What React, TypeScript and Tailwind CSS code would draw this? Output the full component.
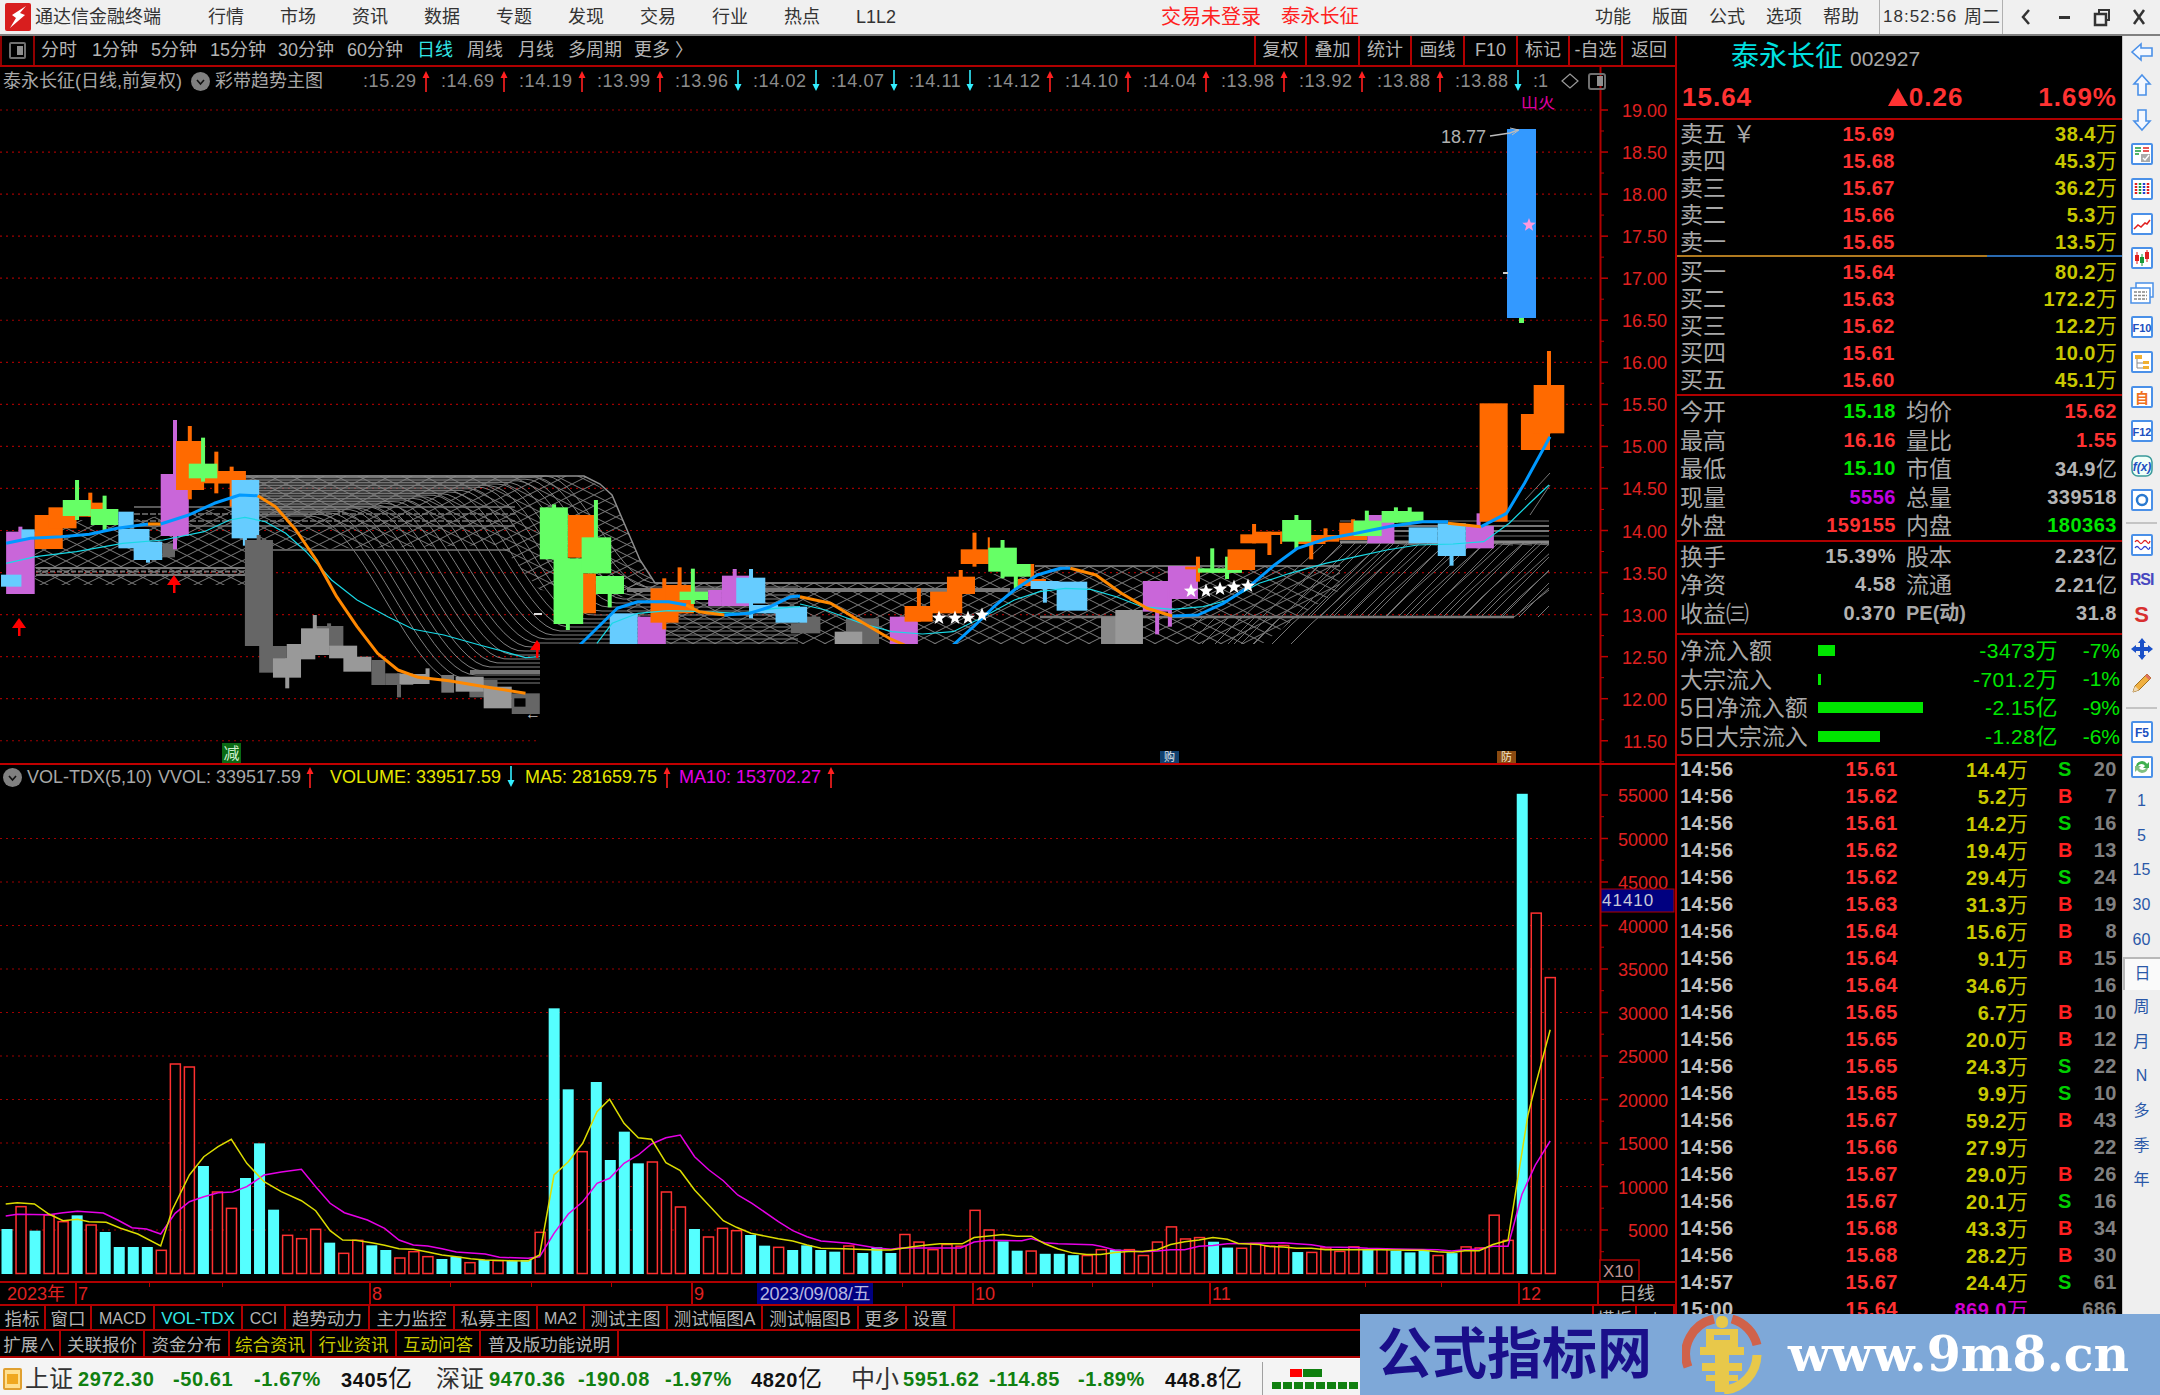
import React from "react";

const OR = "#ff6a00", GR = "#66ff66", PU = "#c966d9", LB = "#66ccff", DG = "#666666", MG = "#999999";

type C = [number, number, number, number, string, number?, number?, number?];
const z7 = (c: C): C => [c[0] / 1.96, c[1] / 1.96, 400 + c[2] / 3, 400 + c[3] / 3, c[4], c[5] === undefined ? undefined : c[5] / 1.96, c[6] === undefined ? undefined : 400 + c[6] / 3, c[7] === undefined ? undefined : 400 + c[7] / 3];
const z8 = (c: C): C => [800 + c[0] / 1.96, 800 + c[1] / 1.96, 400 + c[2] / 3, 400 + c[3] / 3, c[4], c[5] === undefined ? undefined : 800 + c[5] / 1.96, c[6] === undefined ? undefined : 400 + c[6] / 3, c[7] === undefined ? undefined : 400 + c[7] / 3];

const cand7: C[] = [
  [12, 68, 395, 582, PU, 40, 380, 582],
  [2, 42, 524, 560, LB],
  [42, 68, 388, 415, LB],
  [68, 123, 345, 447, OR],
  [95, 150, 322, 385, OR],
  [150, 205, 308, 350, OR, 177, 278, 350],
  [123, 178, 300, 348, GR, 151, 240, 360],
  [178, 232, 327, 375, GR, 205, 287, 390],
  [232, 262, 335, 385, LB],
  [232, 293, 387, 445, LB],
  [262, 318, 425, 480, LB, 290, 425, 488],
  [318, 343, 430, 472, DG],
  [315, 370, 222, 408, PU, 343, 60, 448],
  [345, 400, 123, 270, OR, 372, 78, 298],
  [400, 455, 213, 250, OR, 424, 155, 280],
  [427, 482, 213, 250, OR, 454, 200, 320],
  [370, 426, 191, 235, GR, 398, 113, 245],
  [454, 508, 240, 415, LB, 480, 240, 437],
  [480, 535, 420, 738, DG, 507, 405, 738],
  [508, 562, 738, 818, DG],
  [618, 673, 678, 740, DG, 645, 670, 740],
  [535, 590, 775, 833, MG, 563, 775, 865],
  [562, 618, 732, 778, MG],
  [590, 645, 685, 765, MG, 617, 645, 765],
  [645, 700, 737, 775, MG],
  [673, 728, 770, 815, MG],
  [728, 755, 780, 855, DG],
  [755, 810, 820, 855, DG, 782, 820, 892],
  [783, 838, 822, 852, MG, 838, 805, 852],
  [865, 890, 825, 878, "#777777"],
  [920, 975, 840, 892, DG],
  [893, 948, 830, 875, MG],
  [1003, 1058, 880, 942, DG],
  [948, 1003, 860, 925, MG],
  [1008, 1030, 895, 920, "#000000"],
  [1113, 1168, 345, 473, OR],
  [1140, 1168, 520, 640, OR],
  [1058, 1113, 322, 478, GR, 1086, 313, 478],
  [1085, 1143, 475, 672, GR, 1113, 475, 690],
  [1140, 1198, 412, 520, GR, 1168, 300, 520],
  [1168, 1223, 528, 582, GR, 1195, 528, 622],
  [1195, 1250, 640, 740, LB],
  [1250, 1305, 650, 740, PU],
  [1275, 1330, 565, 668, OR, 1302, 535, 688],
  [1305, 1360, 555, 640, OR, 1332, 502, 640],
  [1332, 1388, 575, 600, GR, 1358, 506, 612],
  [1388, 1415, 570, 618, PU],
  [1415, 1470, 527, 618, PU, 1440, 507, 618],
  [1443, 1500, 533, 610, LB, 1472, 507, 655],
  [1470, 1525, 615, 640, LB],
  [1550, 1568, 670, 700, DG],
  [1520, 1568, 620, 668, LB],
];
const cand8: C[] = [
  [0, 40, 650, 700, DG],
  [90, 155, 655, 735, DG],
  [68, 122, 695, 735, MG],
  [0, 14, 620, 668, LB],
  [176, 231, 650, 735, PU],
  [205, 260, 618, 665, OR, 233, 565, 665],
  [255, 318, 575, 640, OR],
  [288, 343, 530, 582, OR, 315, 510, 582],
  [315, 370, 448, 492, OR, 342, 398, 500],
  [368, 372, 412, 450, OR],
  [427, 482, 537, 558, OR, 455, 492, 558],
  [395, 452, 492, 530, GR, 423, 492, 570],
  [369, 425, 443, 515, GR, 397, 420, 535],
  [452, 507, 543, 567, LB, 480, 543, 608],
  [503, 563, 545, 632, LB],
  [590, 672, 650, 735, "#888888"],
  [618, 672, 630, 735, MG],
  [672, 727, 543, 635, PU, 700, 543, 703],
  [725, 780, 498, 597, PU, 725, 498, 680],
  [755, 782, 500, 508, OR, 780, 470, 545],
  [780, 866, 505, 518, GR, 808, 445, 518],
  [807, 866, 508, 518, GR, 837, 470, 537],
  [838, 892, 448, 510, OR],
  [863, 918, 403, 430, OR, 890, 372, 430],
  [890, 945, 395, 405, OR, 920, 395, 465],
  [941, 945, 395, 432, OR],
  [975, 1030, 405, 432, OR, 1002, 405, 478],
  [1003, 1057, 405, 425, OR, 1030, 385, 425],
  [945, 1002, 360, 425, GR, 973, 345, 447],
  [1057, 1112, 368, 420, OR, 1084, 358, 420],
  [1112, 1165, 345, 430, PU],
  [1085, 1140, 362, 408, GR, 1111, 332, 408],
  [1167, 1222, 335, 365, GR, 1195, 322, 365],
  [1140, 1195, 333, 368, GR, 1168, 322, 368],
  [1193, 1250, 382, 430, LB],
  [1305, 1360, 378, 445, PU, 1330, 340, 445],
  [1250, 1305, 370, 468, LB, 1277, 370, 497],
  [1332, 1387, 10, 365, OR],
  [1413, 1470, 42, 150, OR],
  [1438, 1498, -45, 100, OR, 1468, -147, 100],
];
const candles: C[] = [...cand7.map(z7), ...cand8.map(z8)];

const P7 = (a: number[]) => { const o: string[] = []; for (let i = 0; i < a.length; i += 2) o.push(`${(a[i] / 1.96).toFixed(1)},${(400 + a[i + 1] / 3).toFixed(1)}`); return o.join(" "); };
const P8 = (a: number[]) => { const o: string[] = []; for (let i = 0; i < a.length; i += 2) o.push(`${(800 + a[i] / 1.96).toFixed(1)},${(400 + a[i + 1] / 3).toFixed(1)}`); return o.join(" "); };

const BLUE_T = "#0099ff", ORG_T = "#ff8800", CY_T = "#19d9e6";
const trend: [string, string][] = [
  [BLUE_T, P7([12, 430, 60, 415, 120, 410, 175, 403, 230, 385, 290, 372])],
  [ORG_T, P7([290, 372, 315, 372])],
  [BLUE_T, P7([315, 372, 370, 345, 420, 310, 470, 285, 505, 287])],
  [ORG_T, P7([505, 287, 540, 320, 580, 390, 620, 480, 660, 590, 700, 680, 740, 760, 780, 810, 820, 832, 880, 842, 950, 860, 1030, 880])],
  [BLUE_T, P7([1130, 745, 1180, 670, 1210, 625, 1250, 605, 1310, 605, 1345, 615])],
  [ORG_T, P7([1345, 615, 1370, 635, 1420, 645])],
  [BLUE_T, P7([1420, 645, 1470, 640, 1510, 620, 1550, 590, 1568, 588])],
  [ORG_T, P8([0, 590, 60, 610, 120, 665, 175, 715, 205, 735])],
  [BLUE_T, P8([300, 735, 340, 680, 380, 620, 420, 570, 465, 525, 510, 505, 530, 505])],
  [ORG_T, P8([530, 505, 580, 525, 630, 580, 680, 625, 730, 648])],
  [BLUE_T, P8([730, 648, 780, 645, 830, 610, 880, 560, 930, 495, 975, 445, 1030, 417, 1090, 400, 1160, 378, 1220, 365, 1270, 365])],
  [ORG_T, P8([1270, 370, 1335, 380])],
  [BLUE_T, P8([1335, 380, 1385, 340, 1420, 250, 1470, 110])],
];
const cyan1 = P7([12, 490, 70, 470, 150, 455, 240, 430, 320, 420, 400, 395, 450, 360, 480, 352, 520, 365, 560, 400, 600, 455, 650, 540, 700, 600, 760, 650, 810, 688, 870, 705, 940, 735, 1000, 760, 1030, 773, 1058, 770]);
const cyan2 = P7([1170, 730, 1200, 670, 1250, 640, 1310, 632, 1380, 635, 1450, 640, 1520, 625, 1568, 620]);
const cyan3 = P8([0, 612, 50, 630, 120, 670, 180, 695, 240, 702, 300, 695, 360, 650, 420, 600, 470, 575, 520, 565, 570, 568, 620, 590, 670, 620, 730, 628, 790, 620, 840, 600, 900, 550, 960, 520, 1030, 490, 1090, 470, 1150, 450, 1210, 435, 1280, 432, 1340, 425, 1390, 370, 1430, 310, 1468, 255]);

const smooth = (t: number) => { const u = Math.max(0, Math.min(1, t)); return u * u * (3 - 2 * u); };
const fan = Array.from({ length: 26 }, (_, k) => {
  const t = k / 25;
  const xs = 545 - t * 235, yf = 583 + t * 100, y0 = 476 + t * 40, W = 110 + t * 40;
  const pts: string[] = [];
  for (let x = 245; x <= 800; x += 7) pts.push(`${x},${(y0 + (yf - y0) * smooth((x - xs) / W)).toFixed(1)}`);
  return pts.join(" ");
});
const rise = Array.from({ length: 19 }, (_, k) => {
  const xs = 1215 + k * 19;
  const base = xs < 1295 ? 644 : 617;
  return `${xs},${base} ${xs + 20},${base - 20} ${xs + 80},${base - 74} ${xs + 108},545`;
});

const star = (cx: number, cy: number, r: number) => {
  const p: string[] = [];
  for (let i = 0; i < 10; i++) {
    const a = -Math.PI / 2 + (i * Math.PI) / 5;
    const rr = i % 2 ? r * 0.42 : r;
    p.push(`${(cx + rr * Math.cos(a)).toFixed(1)},${(cy + rr * Math.sin(a)).toFixed(1)}`);
  }
  return p.join(" ");
};

const MainChart = () => {
  const levels = ["19.00", "18.50", "18.00", "17.50", "17.00", "16.50", "16.00", "15.50", "15.00", "14.50", "14.00", "13.50", "13.00", "12.50", "12.00", "11.50"];
  return (
    <svg className="absolute inset-0" width={1676} height={696} viewBox="0 67 1676 696">
      <defs>
        <pattern id="net" width="22" height="11" patternUnits="userSpaceOnUse">
          <path d="M0 0L22 11M0 11L22 0" stroke="#7c7c7c" strokeWidth="1" fill="none" />
        </pattern>
        <pattern id="hatch" width="13" height="13" patternUnits="userSpaceOnUse">
          <path d="M0 13L13 0" stroke="#6e6e6e" strokeWidth="1" fill="none" />
        </pattern>
        <clipPath id="riseClip"><rect x={1100} y={500} width={449} height={160} /></clipPath>
      </defs>
      {levels.map((_, k) => (
        <line key={k} x1={0} x2={1596} y1={110 + 42.05 * k} y2={110 + 42.05 * k} stroke="#a00000" strokeWidth={1.2} strokeDasharray="2 4" />
      ))}
      <polygon fill="url(#net)" points="35,520 130,520 245,505 245,585 35,585" />
      <polygon fill="url(#net)" points="245,476 584,476 612,495 640,560 655,583 655,600 540,590 500,545 270,550 245,585" />
      <polygon fill="url(#net)" points="627,583 948,583 1035,566 1340,566 1340,590 1297,617 1262,644 627,644" />
      <polygon fill="url(#hatch)" points="1193,644 1193,617 1297,617 1262,644" />
      <polygon fill="url(#hatch)" points="1297,617 1514,617 1549,590 1549,543 1340,543 1300,575" />
      {fan.map((p, i) => <polyline key={i} points={p} fill="none" stroke="#808080" strokeWidth={1} />)}
      <g clipPath="url(#riseClip)">
        {rise.map((p, i) => <polyline key={i} points={p} fill="none" stroke="#767676" strokeWidth={1} />)}
      </g>
      <polyline points="245,476 584,476 600,484 612,495 640,560 655,583 948,583" fill="none" stroke="#8e8e8e" strokeWidth={1.5} />
      <polyline points="1035,566 1340,566" fill="none" stroke="#8e8e8e" strokeWidth={1.5} />
      <g stroke="#777" fill="none">
        <line x1={36} x2={245} y1={568} y2={568} strokeWidth={2} />
        <line x1={36} x2={245} y1={571.5} y2={571.5} strokeWidth={2} strokeDasharray="5 2" />
        <line x1={36} x2={245} y1={575} y2={575} strokeWidth={2} />
        <line x1={134} x2={515} y1={507} y2={507} strokeWidth={1.5} />
        <line x1={134} x2={515} y1={514} y2={514} strokeWidth={1.5} strokeDasharray="6 2" />
        <line x1={134} x2={515} y1={521} y2={521} strokeWidth={1.5} strokeDasharray="6 2" />
        <line x1={134} x2={515} y1={526} y2={526} strokeWidth={1.5} />
        <line x1={270} x2={510} y1={550} y2={550} strokeWidth={1.5} />
        <line x1={470} x2={540} y1={672} y2={672} strokeWidth={4} />
        <line x1={627} x2={1010} y1={590} y2={590} strokeWidth={4} />
        <line x1={1040} x2={1514} y1={617} y2={617} strokeWidth={2.5} />
        <line x1={1340} x2={1549} y1={521} y2={521} strokeWidth={1} />
        <line x1={1340} x2={1549} y1={526} y2={526} strokeWidth={2} />
        <line x1={1340} x2={1549} y1={531} y2={531} strokeWidth={2} />
        <line x1={1340} x2={1549} y1={536} y2={536} strokeWidth={1} />
        <line x1={1340} x2={1549} y1={542} y2={542} strokeWidth={3} stroke="#888" />
        <polyline points="1514,617 1549,590" strokeWidth={1} />
      </g>
      {candles.map((c, i) => (
        <g key={i} fill={c[4]}>
          {c[5] !== undefined && <rect x={c[5] - 2} y={c[6]} width={4} height={(c[7] as number) - (c[6] as number)} />}
          <rect x={c[0]} y={c[2]} width={c[1] - c[0]} height={c[3] - c[2]} />
        </g>
      ))}
      <polyline points={cyan1} fill="none" stroke={CY_T} strokeWidth={1.2} />
      <polyline points={cyan2} fill="none" stroke={CY_T} strokeWidth={1.2} />
      <polyline points={cyan3} fill="none" stroke={CY_T} strokeWidth={1.2} />
      {trend.map(([c, p], i) => <polyline key={i} points={p} fill="none" stroke={c} strokeWidth={3} strokeLinejoin="round" />)}
      <polyline points="1525,500 1550,473" fill="none" stroke="#777" strokeWidth={1} />
      <polyline points="1530,515 1550,485" fill="none" stroke="#777" strokeWidth={1} />

      {[[19, 618], [174, 575], [537, 640]].map(([x, y], i) => (
        <g key={i} fill="#ff0000">
          <polygon points={`${x - 7},${y + 10} ${x},${y} ${x + 7},${y + 10}`} />
          <rect x={x - 1} y={y + 9} width={2.5} height={9} />
        </g>
      ))}
      <rect x={534} y={613} width={8} height={2} fill="#ddd" />
      <rect x={540} y={644} width={1060} height={119} fill="#000" />
      <text x={525} y={719} fontSize={16} fill="#bbb">←</text>

      {[[939, 618], [955, 618], [968, 618], [982, 615], [1191, 591], [1206, 591], [1220, 589], [1234, 587], [1248, 586]].map(([x, y], i) => (
        <polygon key={i} points={star(x, y, 7.5)} fill="#fff" />
      ))}

      <rect x={1507} y={129} width={29} height={189} fill="#3399ff" />
      <rect x={1519} y={318} width={5} height={5} fill="#66ff66" />
      <polygon points={star(1529, 225, 7)} fill="#ff99dd" />
      <rect x={1503} y={272} width={5} height={2} fill="#ccc" />
      <text x={1441} y={143} fontSize={18} fill="#b0b0b0">18.77</text>
      <polyline points="1490,136 1510,133 1518,130" fill="none" stroke="#bbb" strokeWidth={1.5} />
      <polyline points="1510,128 1519,130 1512,135" fill="none" stroke="#bbb" strokeWidth={1} />
      <text x={1521} y={108} fontSize={17} fill="#e000a0">山灭</text>
      <rect x={1515} y={91} width={46} height={5} fill="#000" />

      {levels.map((l, k) => {
        const y = 110 + 42.05 * k;
        return (
          <g key={l}>
            <line x1={1600} x2={1608} y1={y} y2={y} stroke="#c00000" strokeWidth={1.5} />
            <line x1={1600} x2={1604} y1={y + 21} y2={y + 21} stroke="#c00000" strokeWidth={1} />
            <text x={1667} y={y + 7} fontSize={18} textAnchor="end" fill="#e02020">{l}</text>
          </g>
        );
      })}
      <line x1={1600.5} x2={1600.5} y1={67} y2={763} stroke="#b00000" strokeWidth={2} />

      <rect x={222} y={743} width={19} height={20} fill="#0a6a14" />
      <text x={231.5} y={759} fontSize={16} textAnchor="middle" fill="#d0f0d0">减</text>
      <rect x={1160} y={751} width={19} height={12} fill="#10406e" />
      <text x={1169.5} y={761} fontSize={11} textAnchor="middle" fill="#e0e8f0">购</text>
      <rect x={1497} y={751} width={19} height={12} fill="#8a4a10" />
      <text x={1506.5} y={761} fontSize={11} textAnchor="middle" fill="#f0e8d0">防</text>
    </svg>
  );
};

const v1 = "C1407 R1340 C1412 R1365 R1385 C1366 R1395 C1416 C1461 C1461 C1461 R1471 R912 R921 C1218 R1296 R1345 C1254 C1150 C1349 R1426 R1436 R1408 C1448 R1480 R1441 C1456 C1470 R1494 R1475 R1490 C1497 C1490 R1508 C1500 R1502 C1503 C1500 R1417 C745 C988 R1175 C966 C1200 C1115 C1210 R1206 R1296 R1341 C1407 R1431 R1405 R1412 C1425 C1457 R1462 C1470 C1456 C1470 C1475 R1458 C1479 C1462 C1479"
  .split(" ").map((s) => ({ c: s[0], y: 760 + Number(s.slice(1)) / 3 }));
const v2 = "R1376 R1398 R1420 R1405 R1410 R1306 R1363 C1396 C1423 R1424 C1432 C1432 C1436 R1437 R1420 C1420 R1420 R1437 R1398 R1354 R1389 R1385 C1397 C1414 R1416 R1402 R1410 R1408 C1427 R1428 R1415 R1425 R1412 C1420 R1418 C1423 C1428 C1422 R1437 C1430 R1412 R1415 R1320 R1393 C98 R444 R631"
  .split(" ").map((s) => ({ c: s[0], y: 760 + Number(s.slice(1)) / 2.9 }));
const bars = [...v1, ...v2];

const L10 = (a: number[]) => { const o: string[] = []; for (let i = 0; i < a.length; i += 2) o.push(`${(a[i] / 1.742).toFixed(1)},${(760 + a[i + 1] / 3).toFixed(1)}`); return o; };
const L11 = (a: number[]) => { const o: string[] = []; for (let i = 0; i < a.length; i += 2) o.push(`${(900 + a[i] / 2.01).toFixed(1)},${(760 + a[i + 1] / 2.9).toFixed(1)}`); return o; };

const yellow = [
  ...L10([10, 1332, 30, 1328, 60, 1332, 85, 1362, 110, 1382, 135, 1378, 155, 1385, 185, 1387, 210, 1405, 240, 1422, 280, 1458, 300, 1350, 330, 1245, 355, 1190, 380, 1160, 403, 1138, 430, 1210, 460, 1265, 490, 1295, 525, 1322, 550, 1352, 575, 1412, 597, 1440, 620, 1441, 650, 1449, 670, 1456, 695, 1466, 720, 1468, 745, 1476, 770, 1485, 795, 1490, 820, 1496, 845, 1500, 890, 1502, 920, 1503, 940, 1485, 965, 1245, 990, 1205, 1015, 1150, 1040, 1055, 1062, 1018, 1087, 1090, 1112, 1133, 1135, 1138, 1160, 1208, 1185, 1232, 1210, 1290, 1260, 1382, 1283, 1402, 1308, 1420, 1356, 1436, 1381, 1443, 1406, 1455, 1430, 1465, 1470, 1466, 1527, 1470, 1552, 1470]),
  ...L11([22, 1412, 50, 1407, 80, 1403, 125, 1403, 149, 1385, 179, 1380, 207, 1376, 235, 1381, 264, 1381, 291, 1403, 318, 1418, 348, 1430, 375, 1434, 403, 1434, 432, 1428, 459, 1425, 487, 1425, 517, 1420, 544, 1405, 572, 1397, 601, 1392, 629, 1385, 658, 1390, 680, 1402, 722, 1405, 743, 1411, 770, 1412, 797, 1416, 827, 1416, 855, 1420, 940, 1420, 967, 1420, 1023, 1422, 1051, 1422, 1081, 1426, 1109, 1428, 1135, 1423, 1164, 1423, 1192, 1405, 1222, 1393, 1240, 1230, 1262, 1030, 1277, 945, 1307, 782]),
].join(" ");
const magenta = [
  ...L10([10, 1368, 30, 1363, 85, 1364, 110, 1358, 135, 1354, 180, 1359, 205, 1380, 230, 1403, 255, 1407, 280, 1422, 305, 1360, 330, 1325, 355, 1310, 380, 1298, 405, 1296, 430, 1280, 460, 1245, 490, 1236, 525, 1228, 550, 1280, 575, 1330, 600, 1358, 640, 1380, 670, 1405, 695, 1440, 720, 1455, 745, 1458, 770, 1466, 795, 1476, 845, 1482, 870, 1492, 920, 1495, 940, 1490, 965, 1420, 990, 1362, 1015, 1325, 1040, 1270, 1062, 1255, 1087, 1210, 1112, 1185, 1135, 1152, 1160, 1133, 1185, 1125, 1210, 1190, 1235, 1230, 1260, 1262, 1285, 1305, 1310, 1330, 1356, 1385, 1381, 1412, 1406, 1430, 1430, 1443, 1478, 1450, 1527, 1464, 1552, 1468]),
  ...L11([0, 1415, 122, 1415, 149, 1398, 179, 1393, 245, 1394, 264, 1388, 291, 1400, 318, 1403, 387, 1406, 403, 1410, 432, 1421, 487, 1426, 517, 1424, 544, 1420, 572, 1420, 601, 1410, 629, 1408, 658, 1403, 770, 1400, 797, 1403, 827, 1406, 855, 1412, 912, 1414, 940, 1416, 996, 1418, 1081, 1420, 1109, 1424, 1135, 1420, 1164, 1418, 1192, 1410, 1222, 1410, 1250, 1260, 1277, 1175, 1307, 1105]),
].join(" ");

const VolChart = () => {
  const labels = ["55000", "50000", "45000", "40000", "35000", "30000", "25000", "20000", "15000", "10000", "5000"];
  return (
    <svg className="absolute inset-0" width={1676} height={516} viewBox="0 765 1676 516">
      {labels.slice(1).map((l, k) => (
        <line key={l} x1={0} x2={1596} y1={838.5 + 43.5 * k} y2={838.5 + 43.5 * k} stroke="#a00000" strokeWidth={1.2} strokeDasharray="2 4" />
      ))}
      {bars.map((b, i) => {
        const x = 7 + 14.03 * i;
        return b.c === "C" ? (
          <rect key={i} x={x - 5.5} y={b.y} width={11} height={1274 - b.y} fill="#55ffff" />
        ) : (
          <rect key={i} x={x - 5} y={b.y} width={10} height={1273.5 - b.y} fill="#000" stroke="#ff3030" strokeWidth={1.5} />
        );
      })}
      <polyline points={magenta} fill="none" stroke="#e600e6" strokeWidth={1.5} />
      <polyline points={yellow} fill="none" stroke="#dcdc00" strokeWidth={1.5} />
      {labels.map((l, k) => {
        const y = 795 + 43.5 * k;
        return (
          <g key={l}>
            <line x1={1600} x2={1608} y1={y} y2={y} stroke="#c00000" strokeWidth={1.5} />
            <line x1={1600} x2={1604} y1={y + 21.7} y2={y + 21.7} stroke="#c00000" strokeWidth={1} />
            <text x={1668} y={y + 7} fontSize={18} textAnchor="end" fill="#e02020">{l}</text>
          </g>
        );
      })}
      <line x1={1600.5} x2={1600.5} y1={765} y2={1281} stroke="#b00000" strokeWidth={2} />
      <rect x={1601} y={889} width={73} height={23} fill="#000080" stroke="#b00000" strokeWidth={1} />
      <text x={1602} y={906} fontSize={17} letterSpacing={1} fill="#c8c8d8">41410</text>
      <rect x={1600} y={1260} width={39} height={21} fill="#000" stroke="#b00000" strokeWidth={1.5} />
      <text x={1603} y={1277} fontSize={17} fill="#c09090">X10</text>
    </svg>
  );
};

const ArrowUp = () => (
  <svg width={8} height={24} viewBox="0 0 8 24" className="shrink-0"><path d="M4 2L7.5 9H4.8V23H3.2V9H.5Z" fill="#ff2020" /></svg>
);
const ArrowDown = () => (
  <svg width={8} height={24} viewBox="0 0 8 24" className="shrink-0"><path d="M3.2 1H4.8V15H7.5L4 22L.5 15H3.2Z" fill="#33eeff" /></svg>
);
const CircleDown = () => (
  <span className="flex h-[19px] w-[19px] items-center justify-center rounded-full bg-[#808080]">
    <svg width={11} height={11} viewBox="0 0 11 11"><path d="M2 4L5.5 8L9 4" stroke="#111" strokeWidth={1.6} fill="none" /></svg>
  </span>
);

const series: [string, boolean][] = [["15.29", true], ["14.69", true], ["14.19", true], ["13.99", true], ["13.96", false], ["14.02", false], ["14.07", false], ["14.11", false], ["14.12", true], ["14.10", true], ["14.04", true], ["13.98", true], ["13.92", true], ["13.88", true], ["13.88", false]];

const TitleBar = () => (
  <div className="flex h-[36px] items-center border-b-2 border-[#808080] bg-[#f0f0f0] text-[18px] text-[#333]">
    <div className="flex w-[35px] justify-center">
      <svg width={26} height={28} viewBox="0 0 26 28">
        <rect width={26} height={28} rx={2} fill="#d81e1e" />
        <path d="M21 3L7 12L11 15L5 25L20 12L15 10Z" fill="#fff" />
      </svg>
    </div>
    <div className="w-[173px]">通达信金融终端</div>
    {["行情", "市场", "资讯", "数据", "专题", "发现", "交易", "行业", "热点", "L1L2"].map((m) => (
      <div key={m} className="w-[72px]">{m}</div>
    ))}
    <div className="w-[233px]" />
    <div className="w-[120px] text-[20px] text-[#ff2020]">交易未登录</div>
    <div className="w-[314px] text-[19.5px] text-[#ff2020]">泰永长征</div>
    {["功能", "版面", "公式", "选项", "帮助"].map((m) => (
      <div key={m} className="w-[57px]">{m}</div>
    ))}
    <div className="ml-[-1px] flex h-[34px] w-[124px] items-center border-x border-[#b0b0b0] pl-[3px]">
      <span className="w-[81px] text-[17px] tracking-[1px]">18:52:56</span>
      <span>周二</span>
    </div>
    <svg width={157} height={24} viewBox="0 0 157 24" className="shrink-0">
      <path d="M26 5L20 12L26 19" stroke="#333" strokeWidth={2.5} fill="none" />
      <rect x={56} y={11} width={11} height={3} fill="#333" />
      <rect x={92} y={9} width={11} height={11} fill="none" stroke="#333" strokeWidth={2.5} />
      <path d="M96 8V5H106V15H104" fill="none" stroke="#333" strokeWidth={2} />
      <path d="M131 5L141 19M141 5L131 19" stroke="#333" strokeWidth={2.5} />
    </svg>
  </div>
);

const periods: [string, string][] = [["分时", "w-[51px]"], ["1分钟", "w-[59px]"], ["5分钟", "w-[59px]"], ["15分钟", "w-[68px]"], ["30分钟", "w-[69px]"], ["60分钟", "w-[70px]"], ["日线", "w-[50px] text-[#33e6e6]"], ["周线", "w-[51px]"], ["月线", "w-[50px]"], ["多周期", "w-[66px]"], ["更多 〉", "w-[60px]"]];
const toolRight: [string, string][] = [["复权", "w-[51px]"], ["叠加", "w-[53px]"], ["统计", "w-[52px]"], ["画线", "w-[53px]"], ["F10", "w-[53px]"], ["标记", "w-[52px]"], ["-自选", "w-[53px]"], ["返回", "w-[54px]"]];

const ChartToolbar = () => (
  <div className="flex h-[31px] shrink-0 items-center border-b-2 border-[#b00000] text-[18px] text-[#b4b4b4]">
    <div className="mr-[6px] flex h-full w-[35px] items-center justify-center border-x-2 border-[#900000]">
      <span className="flex h-[17px] w-[17px] items-center justify-end rounded-[2px] border-2 border-[#707070] pr-[1px]">
        <span className="h-[9px] w-[6px] bg-[#909090]" />
      </span>
    </div>
    {periods.map(([t, c]) => (<div key={t} className={`${c} whitespace-nowrap`}>{t}</div>))}
    <div className="flex-1" />
    {toolRight.map(([t, c]) => (
      <div key={t} className={`${c} flex h-full items-center justify-center border-l-2 border-[#b00000]`}>{t}</div>
    ))}
  </div>
);

const ChartPanes = () => (
  <>
    <div className="relative h-[696px] shrink-0 overflow-hidden">
      <MainChart />
      <div className="relative flex h-[28px] items-center text-[18px] text-[#a8a8a8]">
        <div className="w-[191px] whitespace-nowrap pl-[3px]">泰永长征(日线,前复权)</div>
        <div className="w-[24px]"><CircleDown /></div>
        <div className="w-[148px]">彩带趋势主图</div>
        {series.map(([v, up], i) => (
          <div key={i} className="flex w-[78px] items-center gap-[5px] tracking-[0.6px] text-[#8c8c8c]">
            <span>:{v}</span>{up ? <ArrowUp /> : <ArrowDown />}
          </div>
        ))}
        <div className="w-[27px] text-[#8c8c8c]">:1</div>
        <svg width={28} height={18} viewBox="0 0 28 18"><path d="M2 9L10 2L18 9L10 16Z" fill="none" stroke="#999" strokeWidth={1.2} /></svg>
        <span className="flex h-[17px] w-[18px] items-center justify-end rounded-[3px] border-2 border-[#707070] pr-[1px]">
          <span className="h-[10px] w-[6px] bg-[#909090]" />
        </span>
      </div>
    </div>
    <div className="h-[2px] shrink-0 bg-[#c00000]" />
    <div className="relative h-[516px] shrink-0 overflow-hidden">
      <VolChart />
      <div className="relative flex h-[24px] items-center whitespace-nowrap text-[18px] text-[#a8a8a8]">
        <div className="w-[27px] pl-[3px]"><CircleDown /></div>
        <div className="w-[131px]">VOL-TDX(5,10)</div>
        <div className="w-[148px]">VVOL: 339517.59</div>
        <div className="w-[24px]"><ArrowUp /></div>
        <div className="w-[177px] text-[#e6e600]">VOLUME: 339517.59</div>
        <div className="w-[18px]"><ArrowDown /></div>
        <div className="w-[138px] text-[#e6e600]">MA5: 281659.75</div>
        <div className="w-[16px]"><ArrowUp /></div>
        <div className="w-[148px] text-[#e600e6]">MA10: 153702.27</div>
        <ArrowUp />
      </div>
    </div>
  </>
);

const ticksX = [149, 222, 450, 531, 611, 902, 1032, 1092, 1152, 1365, 1441];
const DateRow = () => (
  <div className="flex h-[25px] shrink-0 items-center border-y-2 border-[#b00000] text-[18px] text-[#e02020]">
    <div className="relative flex h-full w-[1599px] items-center border-r-2 border-[#b00000]">
      {ticksX.map((x) => (<span key={x} className="absolute top-0 h-[4px] w-[1px] bg-[#b00000]" style={{ left: x }} />))}
      <div className="flex h-full w-[77px] items-center border-r-2 border-[#b00000] pl-[7px] pt-[2px]">2023年</div>
      <div className="flex h-full w-[294px] items-center border-r-2 border-[#b00000] pl-[1px] pt-[2px]">7</div>
      <div className="flex h-full w-[322px] items-center border-r-2 border-[#b00000] pl-[1px] pt-[2px]">8</div>
      <div className="flex h-full w-[64px] items-center pl-[1px] pt-[2px]">9</div>
      <div className="flex h-full w-[116px] items-center justify-center bg-[#000080] pt-[2px] text-[18px] whitespace-nowrap tracking-[-0.2px] text-[#b8b8e0]">2023/09/08/五</div>
      <div className="flex h-full w-[101px] items-center border-r-2 border-[#b00000]" />
      <div className="flex h-full w-[237px] items-center border-r-2 border-[#b00000] pl-[1px] pt-[2px]">10</div>
      <div className="flex h-full w-[309px] items-center border-r-2 border-[#b00000] pl-[1px] pt-[2px]">11</div>
      <div className="flex h-full items-center pl-[1px] pt-[2px]">12</div>
    </div>
    <div className="flex-1 pt-[2px] text-center text-[#b0b0b0]">日线</div>
  </div>
);

const tabs1: [string, string][] = [["指标", "w-[46px]"], ["窗口", "w-[46px]"], ["MACD", "w-[63px] text-[16px]"], ["VOL-TDX", "w-[88px] text-[#33e6e6] text-[17px]"], ["CCI", "w-[43px] text-[16px]"], ["趋势动力", "w-[84px]"], ["主力监控", "w-[85px]"], ["私募主图", "w-[83px]"], ["MA2", "w-[47px] text-[16px]"], ["测试主图", "w-[83px]"], ["测试幅图A", "w-[95px]"], ["测试幅图B", "w-[96px]"], ["更多", "w-[48px]"], ["设置", "w-[48px]"]];
const tabs2: [string, string][] = [["扩展∧", "w-[61px]"], ["关联报价", "w-[84px]"], ["资金分布", "w-[85px]"], ["综合资讯", "w-[82px] text-[#c8c800]"], ["行业资讯", "w-[85px] text-[#c8c800]"], ["互动问答", "w-[84px] text-[#c8c800]"], ["普及版功能说明", "w-[138px]"]];

const TabRows = () => (
  <>
    <div className="flex h-[25px] shrink-0 items-center overflow-hidden border-b-2 border-[#b00000] text-[17.5px] whitespace-nowrap text-[#b4b4b4]">
      {tabs1.map(([t, c]) => (
        <div key={t} className={`${c} flex h-full items-center justify-center border-r-2 border-[#b00000] pt-[3px]`}>{t}</div>
      ))}
      <div className="flex-1" />
      <div className="flex h-full w-[45px] items-start justify-center border-x-2 border-[#b00000]">模板</div>
      <div className="w-[38px] border-r-2 border-[#b00000] text-center">+</div>
    </div>
    <div className="flex h-[27px] shrink-0 items-center overflow-hidden border-b-2 border-[#b00000] text-[17.5px] whitespace-nowrap text-[#b4b4b4]">
      {tabs2.map(([t, c]) => (
        <div key={t} className={`${c} flex h-full items-center justify-center border-r-2 border-[#b00000] pt-[3px]`}>{t}</div>
      ))}
    </div>
  </>
);

const Num = ({ v, c = "text-[#ff3232]", unit }: { v: string; c?: string; unit?: string }) => (
  <span className={`${c} whitespace-nowrap text-[20px] font-bold tracking-[0.5px]`}>
    {v}{unit && <span className="text-[21px] font-normal tracking-normal">{unit}</span>}
  </span>
);
const YL = "text-[#c8c800]", GN = "text-[#00e600]", GY = "text-[#b4b4b4]", PP = "text-[#c000e0]";

const Level = ({ l, p, v, extra }: { l: string; p: string; v: string; extra?: string }) => (
  <div className="flex h-[27px] items-center pl-[3px] pr-[5px]">
    <div className="flex w-[218px] items-center pr-[3px]">
      <span className="pt-[2px] text-[23px] text-[#a8a8a8]">{l}{extra}</span>
      <span className="ml-auto"><Num v={p} /></span>
    </div>
    <span className="ml-auto"><Num v={v} c={YL} unit="万" /></span>
  </div>
);

const Stat = ({ a, b, ac, c, d, dc, unit, cb }: { a: string; b: string; ac: string; c: string; d: string; dc: string; unit?: string; cb?: boolean }) => (
  <div className="flex h-[28.5px] items-center pl-[3px] pr-[5px]">
    <div className="flex w-[218px] items-center pr-[2px]">
      <span className="whitespace-nowrap pt-[2px] text-[23px] text-[#a8a8a8]">{a}</span>
      <span className="ml-auto"><Num v={b} c={ac} /></span>
    </div>
    <span className={`ml-[8px] whitespace-nowrap text-[#a8a8a8] ${cb ? "text-[20px] font-bold" : "pt-[2px] text-[23px]"}`}>{c}</span>
    <span className="ml-auto"><Num v={d} c={dc} unit={unit} /></span>
  </div>
);

const Flow = ({ l, w, v, u, p }: { l: string; w: string; v: string; u: string; p: string }) => (
  <div className="flex h-[28.7px] items-center pl-[3px] pr-[2px]">
    <span className="w-[138px] whitespace-nowrap pt-[2px] text-[23px] text-[#a8a8a8]">{l}</span>
    <span className={`${w} h-[11px] bg-[#00e600]`} />
    <span className="ml-auto whitespace-nowrap text-[21px] tracking-[0.5px] text-[#00e600]">{v}<span className="text-[22px]">{u}</span></span>
    <span className="w-[62px] text-right text-[21px] text-[#00e600]">{p}</span>
  </div>
);

const tradeRows: [string, string, string, string, string][] = [
  ["14:56", "15.61", "14.4", "S", "20"], ["14:56", "15.62", "5.2", "B", "7"], ["14:56", "15.61", "14.2", "S", "16"], ["14:56", "15.62", "19.4", "B", "13"],
  ["14:56", "15.62", "29.4", "S", "24"], ["14:56", "15.63", "31.3", "B", "19"], ["14:56", "15.64", "15.6", "B", "8"], ["14:56", "15.64", "9.1", "B", "15"],
  ["14:56", "15.64", "34.6", "", "16"], ["14:56", "15.65", "6.7", "B", "10"], ["14:56", "15.65", "20.0", "B", "12"], ["14:56", "15.65", "24.3", "S", "22"],
  ["14:56", "15.65", "9.9", "S", "10"], ["14:56", "15.67", "59.2", "B", "43"], ["14:56", "15.66", "27.9", "", "22"], ["14:56", "15.67", "29.0", "B", "26"],
  ["14:56", "15.67", "20.1", "S", "16"], ["14:56", "15.68", "43.3", "B", "34"], ["14:56", "15.68", "28.2", "B", "30"], ["14:57", "15.67", "24.4", "S", "61"],
  ["15:00", "15.64", "869.0", "", "686"],
];

const Sep = () => <div className="h-[2px] shrink-0 bg-[#b00000]" />;

const QuotePanel = () => (
  <div className="flex w-[445px] shrink-0 flex-col overflow-hidden">
    <div className="flex h-[40px] shrink-0 items-end pl-[54px]">
      <span className="text-[28px] leading-[38px] text-[#00e0e0]">泰永长征</span>
      <span className="ml-[7px] pb-[2px] text-[21px] text-[#a8a8a8]">002927</span>
    </div>
    <div className="flex h-[42px] shrink-0 items-center justify-between pl-[5px] pr-[5px] text-[26px] font-bold tracking-[1px] text-[#ff3232]">
      <span>15.64</span>
      <span className="ml-[60px] flex items-center">
        <svg width={22} height={20} viewBox="0 0 22 20" className="shrink-0"><path d="M11 1L21 19H1Z" fill="#ff3232" /></svg>
        0.26
      </span>
      <span>1.69%</span>
    </div>
    <Sep />
    <Level l="卖五" extra=" ￥" p="15.69" v="38.4" />
    <Level l="卖四" p="15.68" v="45.3" />
    <Level l="卖三" p="15.67" v="36.2" />
    <Level l="卖二" p="15.66" v="5.3" />
    <Level l="卖一" p="15.65" v="13.5" />
    <div className="flex h-[2px] shrink-0"><span className="w-[310px] bg-[#b07a20]" /><span className="flex-1 bg-[#2a6ab0]" /></div>
    <div className="h-[1px] shrink-0" />
    <Level l="买一" p="15.64" v="80.2" />
    <Level l="买二" p="15.63" v="172.2" />
    <Level l="买三" p="15.62" v="12.2" />
    <Level l="买四" p="15.61" v="10.0" />
    <Level l="买五" p="15.60" v="45.1" />
    <div className="h-[1px] shrink-0" />
    <Sep />
    <div className="h-[1px] shrink-0" />
    <Stat a="今开" b="15.18" ac={GN} c="均价" d="15.62" dc="text-[#ff3232]" />
    <Stat a="最高" b="16.16" ac="text-[#ff3232]" c="量比" d="1.55" dc="text-[#ff3232]" />
    <Stat a="最低" b="15.10" ac={GN} c="市值" d="34.9" unit="亿" dc={GY} />
    <Stat a="现量" b="5556" ac={PP} c="总量" d="339518" dc={GY} />
    <Stat a="外盘" b="159155" ac="text-[#ff3232]" c="内盘" d="180363" dc={GN} />
    <Sep />
    <Stat a="换手" b="15.39%" ac={GY} c="股本" d="2.23" unit="亿" dc={GY} />
    <Stat a="净资" b="4.58" ac={GY} c="流通" d="2.21" unit="亿" dc={GY} />
    <Stat a="收益㈢" b="0.370" ac={GY} c="PE(动)" cb d="31.8" dc={GY} />
    <div className="h-[6px] shrink-0" />
    <Sep />
    <div className="h-[1px] shrink-0" />
    <Flow l="净流入额" w="w-[17px]" v="-3473" u="万" p="-7%" />
    <Flow l="大宗流入" w="w-[3px]" v="-701.2" u="万" p="-1%" />
    <Flow l="5日净流入额" w="w-[105px]" v="-2.15" u="亿" p="-9%" />
    <Flow l="5日大宗流入" w="w-[62px]" v="-1.28" u="亿" p="-6%" />
    <div className="h-[3px] shrink-0" />
    <Sep />
    {tradeRows.map((r, i) => (
      <div key={i} className="flex h-[27px] shrink-0 items-center pl-[3px] pr-[5px]">
        <span className="w-[165px]"><Num v={r[0]} c="text-[#c0c0c0]" /></span>
        <span className="w-[53px] text-right"><Num v={r[1]} /></span>
        <span className="w-[130px] text-right">
          <Num v={r[2]} c={r[2] === "869.0" ? "text-[#d000d0]" : YL} unit="万" />
        </span>
        <span className={`ml-[30px] w-[14px] text-[20px] font-bold ${r[3] === "S" ? "text-[#00d000]" : "text-[#ff2020]"}`}>{r[3]}</span>
        <span className="ml-auto"><Num v={r[4]} c="text-[#808080]" /></span>
      </div>
    ))}
  </div>
);

const Ic = ({ children }: { children: React.ReactNode }) => (
  <svg width={24} height={24} viewBox="0 0 24 24">
    <rect x={2} y={2} width={20} height={20} rx={1} fill="#fff" stroke="#4a90e8" strokeWidth={2} />
    {children}
  </svg>
);
const Slot = ({ children, h = "h-[34.6px]" }: { children: React.ReactNode; h?: string }) => (
  <div className={`${h} flex shrink-0 items-center justify-center`}>{children}</div>
);
const Hr = ({ h }: { h: string }) => (
  <div className={`${h} flex shrink-0 items-center px-[3px]`}><span className="h-[2px] w-full bg-[#c4c4c4]" /></div>
);
const NumBtn = ({ t, h }: { t: string; h?: string }) => (
  <Slot h={h}><span className="text-[16px] text-[#2a58a8]">{t}</span></Slot>
);
const ArrowIc = ({ d }: { d: string }) => (
  <svg width={24} height={24} viewBox="0 0 24 24"><path d={d} fill="#f4f8ff" stroke="#4a90e8" strokeWidth={1.6} /></svg>
);

const SideBar = () => (
  <div className="flex w-[38px] shrink-0 flex-col overflow-hidden border-l border-[#c8c8c8] bg-[#efefef]">
    <Slot h="h-[32px]"><ArrowIc d="M2 12L11 4V8H22V16H11V20Z" /></Slot>
    <Slot><ArrowIc d="M12 2L20 11H16V22H8V11H4Z" /></Slot>
    <Slot><ArrowIc d="M12 22L20 13H16V2H8V13H4Z" /></Slot>
    <Slot><Ic><path d="M5 6H11M5 9H11M5 12H9" stroke="#1a9a3a" strokeWidth={1.5} /><path d="M13 6H19M13 9H19" stroke="#e02020" strokeWidth={1.5} /><rect x={11} y={12} width={9} height={8} fill="#aaa" /><path d="M13 16L15 18L19 13" stroke="#fff" strokeWidth={1.4} fill="none" /></Ic></Slot>
    <Slot><Ic><path d="M6 6V18" stroke="#e02020" strokeWidth={2.5} strokeDasharray="2 1" /><path d="M10 6V18" stroke="#1a9a3a" strokeWidth={2.5} strokeDasharray="2 1" /><path d="M14 6V18" stroke="#2040d0" strokeWidth={2.5} strokeDasharray="2 1" /><path d="M18 6V18" stroke="#e02020" strokeWidth={2.5} strokeDasharray="2 1" /></Ic></Slot>
    <Slot><Ic><polyline points="4,17 8,13 11,15 15,11 17,12 20,8" fill="none" stroke="#e02020" strokeWidth={1.5} /></Ic></Slot>
    <Slot><Ic><path d="M7 6V18" stroke="#e02020" strokeWidth={1} /><rect x={5} y={9} width={4} height={6} fill="#e02020" /><path d="M12 8V20" stroke="#1a9a3a" strokeWidth={1} /><rect x={10} y={11} width={4} height={6} fill="#1a9a3a" /><path d="M17 4V16" stroke="#e02020" strokeWidth={1} /><rect x={15} y={6} width={4} height={7} fill="#e02020" /></Ic></Slot>
    <Slot><svg width={26} height={24} viewBox="0 0 26 24"><rect x={7} y={2} width={17} height={14} fill="#fff" stroke="#4a90e8" strokeWidth={1.5} /><rect x={2} y={7} width={19} height={15} fill="#fff" stroke="#4a90e8" strokeWidth={1.5} /><path d="M5 11H18M5 14.5H18M5 18H18" stroke="#888" strokeWidth={1.5} strokeDasharray="3 1" /></svg></Slot>
    <Slot><Ic><text x={12} y={17} fontSize={11} textAnchor="middle" fontWeight="bold" fill="#2050c0">F10</text></Ic></Slot>
    <Slot><Ic><rect x={5} y={5} width={7} height={4} fill="#f0b030" /><rect x={13} y={11} width={6} height={3} fill="#f0b030" /><rect x={13} y={16} width={6} height={3} fill="#f0b030" /><path d="M7 9V18H13M7 13H13" stroke="#888" fill="none" /></Ic></Slot>
    <Slot><Ic><text x={12} y={18} fontSize={14} textAnchor="middle" fontWeight="bold" fill="#f07020">自</text></Ic></Slot>
    <Slot><Ic><text x={12} y={17} fontSize={11} textAnchor="middle" fontWeight="bold" fill="#2050c0">F12</text></Ic></Slot>
    <Slot><svg width={24} height={24} viewBox="0 0 24 24"><rect x={2} y={2} width={20} height={20} rx={6} fill="#f0fff8" stroke="#3a9a9a" strokeWidth={1.5} /><text x={12} y={17} fontSize={12} textAnchor="middle" fontStyle="italic" fontWeight="bold" fill="#2050c0">f(x)</text></svg></Slot>
    <Slot><Ic><circle cx={12} cy={12} r={5} fill="none" stroke="#2a7ad0" strokeWidth={2.5} /></Ic></Slot>
    <Hr h="h-[10px]" />
    <Slot><Ic><path d="M5 9Q7 6 9 9T13 9T17 9T20 8" fill="none" stroke="#e02020" strokeWidth={1.3} /><path d="M5 15Q7 12 9 15T13 15T17 15T20 14" fill="none" stroke="#3040d0" strokeWidth={1.3} /></Ic></Slot>
    <Slot><span className="text-[16px] font-bold tracking-[-1px] text-[#4848c0]">RSI</span></Slot>
    <Slot><span className="text-[22px] font-bold text-[#d83030]">S</span></Slot>
    <Slot><svg width={24} height={24} viewBox="0 0 24 24"><path d="M12 1L16 6H14V10H18V8L23 12L18 16V14H14V18H16L12 23L8 18H10V14H6V16L1 12L6 8V10H10V6H8Z" fill="#1a50c8" /></svg></Slot>
    <Slot><svg width={24} height={24} viewBox="0 0 24 24"><path d="M3 21L5 15L17 3L21 7L9 19Z" fill="#f0b040" stroke="#a07020" /><path d="M3 21L5 15L9 19Z" fill="#f0d8b0" /><path d="M17 3L21 7L19 9L15 5Z" fill="#e07060" /></svg></Slot>
    <Hr h="h-[14px]" />
    <Slot><Ic><text x={12} y={17} fontSize={12} textAnchor="middle" fontWeight="bold" fill="#2050c0">F5</text></Ic></Slot>
    <Slot><Ic><path d="M6 11A6 6 0 0 1 17 9L19 7V13H13L15 11A4 4 0 0 0 8 11Z" fill="#40b050" /><path d="M18 13A6 6 0 0 1 7 15L5 17V11H11L9 13A4 4 0 0 0 16 13Z" fill="#80c080" /></Ic></Slot>
    <NumBtn t="1" />
    <NumBtn t="5" />
    <NumBtn t="15" />
    <NumBtn t="30" />
    <NumBtn t="60" />
    <div className="flex h-[33px] shrink-0 items-center justify-center border-l-2 border-t-2 border-[#b8b8b8] bg-[#fafafa] text-[16px] text-[#2a58a8]">日</div>
    {["周", "月", "N", "多", "季", "年"].map((t) => (<NumBtn key={t} t={t} />))}
  </div>
);

const Q = ({ w, c, t, u }: { w: string; c: string; t: string; u?: string }) => (
  <div className={`${w} shrink-0 whitespace-nowrap tracking-[0.6px] ${c}`}>{t}{u && <span className="text-[24px] font-normal tracking-normal">{u}</span>}</div>
);

const StatusBar = () => (
  <div className="flex h-[37px] shrink-0 items-center border-t border-[#fff] bg-[#f4f4f4] pt-[3px] text-[20px] text-[#333]">
    <div className="flex w-[25px] justify-center">
      <span className="flex h-[22px] w-[19px] items-center justify-center rounded-[2px] border-2 border-[#e0a030] bg-[#ffe090]"><span className="h-[10px] w-[11px] bg-[#f0a820]" /></span>
    </div>
    <div className="w-[53px] text-[24px] font-normal">上证</div>
    <Q w="w-[95px]" c="font-bold text-[#108010]" t="2972.30" />
    <Q w="w-[81px]" c="font-bold text-[#108010]" t="-50.61" />
    <Q w="w-[87px]" c="font-bold text-[#108010]" t="-1.67%" />
    <Q w="w-[95px]" c="font-bold text-[#111]" t="3405" u="亿" />
    <div className="w-[53px] text-[24px]">深证</div>
    <Q w="w-[89px]" c="font-bold text-[#108010]" t="9470.36" />
    <Q w="w-[87px]" c="font-bold text-[#108010]" t="-190.08" />
    <Q w="w-[86px]" c="font-bold text-[#108010]" t="-1.97%" />
    <Q w="w-[100px]" c="font-bold text-[#111]" t="4820" u="亿" />
    <div className="w-[52px] text-[24px]">中小</div>
    <Q w="w-[86px]" c="font-bold text-[#108010]" t="5951.62" />
    <Q w="w-[89px]" c="font-bold text-[#108010]" t="-114.85" />
    <Q w="w-[87px]" c="font-bold text-[#108010]" t="-1.89%" />
    <Q w="w-[96px]" c="font-bold text-[#111]" t="448.8" u="亿" />
    <div className="ml-[1px] h-[33px] w-[1px] bg-[#a0a0a0]" />
    <div className="ml-[9px] flex flex-col gap-[5px]">
      <div className="flex h-[8px] pl-[18px]"><span className="w-[12px] bg-[#ff0000]" /><span className="ml-[1px] w-[19px] bg-[#108010]" /></div>
      <div className="flex gap-[2px]">{[0, 1, 2, 3, 4, 5, 6, 7].map((i) => (<span key={i} className="h-[7px] w-[9px] bg-[#108010]" />))}</div>
    </div>
  </div>
);

const Watermark = () => (
  <div className="absolute bottom-0 left-[1360px] flex h-[81px] w-[800px] items-center bg-[#7ea8d8] pl-[17px]">
    <div className="w-[305px] whitespace-nowrap text-[55px] font-bold leading-none text-[#1a0f8a]">公式指标网</div>
    <svg width={80} height={79} viewBox="0 0 80 79" className="shrink-0">
      <path d="M6 52A36 36 0 0 1 32 4" fill="none" stroke="#d0624a" strokeWidth={9} />
      <path d="M50 4A36 36 0 0 1 75 30" fill="none" stroke="#d0624a" strokeWidth={9} />
      <path d="M75 40A36 36 0 0 1 42 75" fill="none" stroke="#e8c84a" strokeWidth={9} />
      <rect x={34} y={1} width={12} height={12} rx={5} fill="#e8c84a" />
      <rect x={24} y={14} width={32} height={18} fill="#e8c84a" />
      <rect x={32} y={20} width={16} height={5} fill="#7ea8d8" />
      <rect x={18} y={32} width={44} height={8} fill="#e8c84a" />
      <rect x={33} y={40} width={14} height={37} fill="#e8c84a" />
      <rect x={20} y={48} width={40} height={8} fill="#e8c84a" />
      <rect x={24} y={60} width={32} height={6} fill="#e8c84a" />
    </svg>
    <div className="ml-[26px] whitespace-nowrap font-['DejaVu_Serif',serif] text-[49px] font-bold leading-none text-white">www.9m8.cn</div>
  </div>
);

export default function App() {
  return (
    <div className="relative flex h-[1395px] w-[2160px] flex-col overflow-hidden bg-black font-['Liberation_Sans','Noto_Sans_CJK_SC',sans-serif]">
      <TitleBar />
      <div className="flex h-[1322px] shrink-0">
        <div className="flex w-[1677px] shrink-0 flex-col overflow-hidden border-r-2 border-[#b00000]">
          <ChartToolbar />
          <ChartPanes />
          <DateRow />
          <TabRows />
        </div>
        <QuotePanel />
        <SideBar />
      </div>
      <StatusBar />
      <Watermark />
    </div>
  );
}
